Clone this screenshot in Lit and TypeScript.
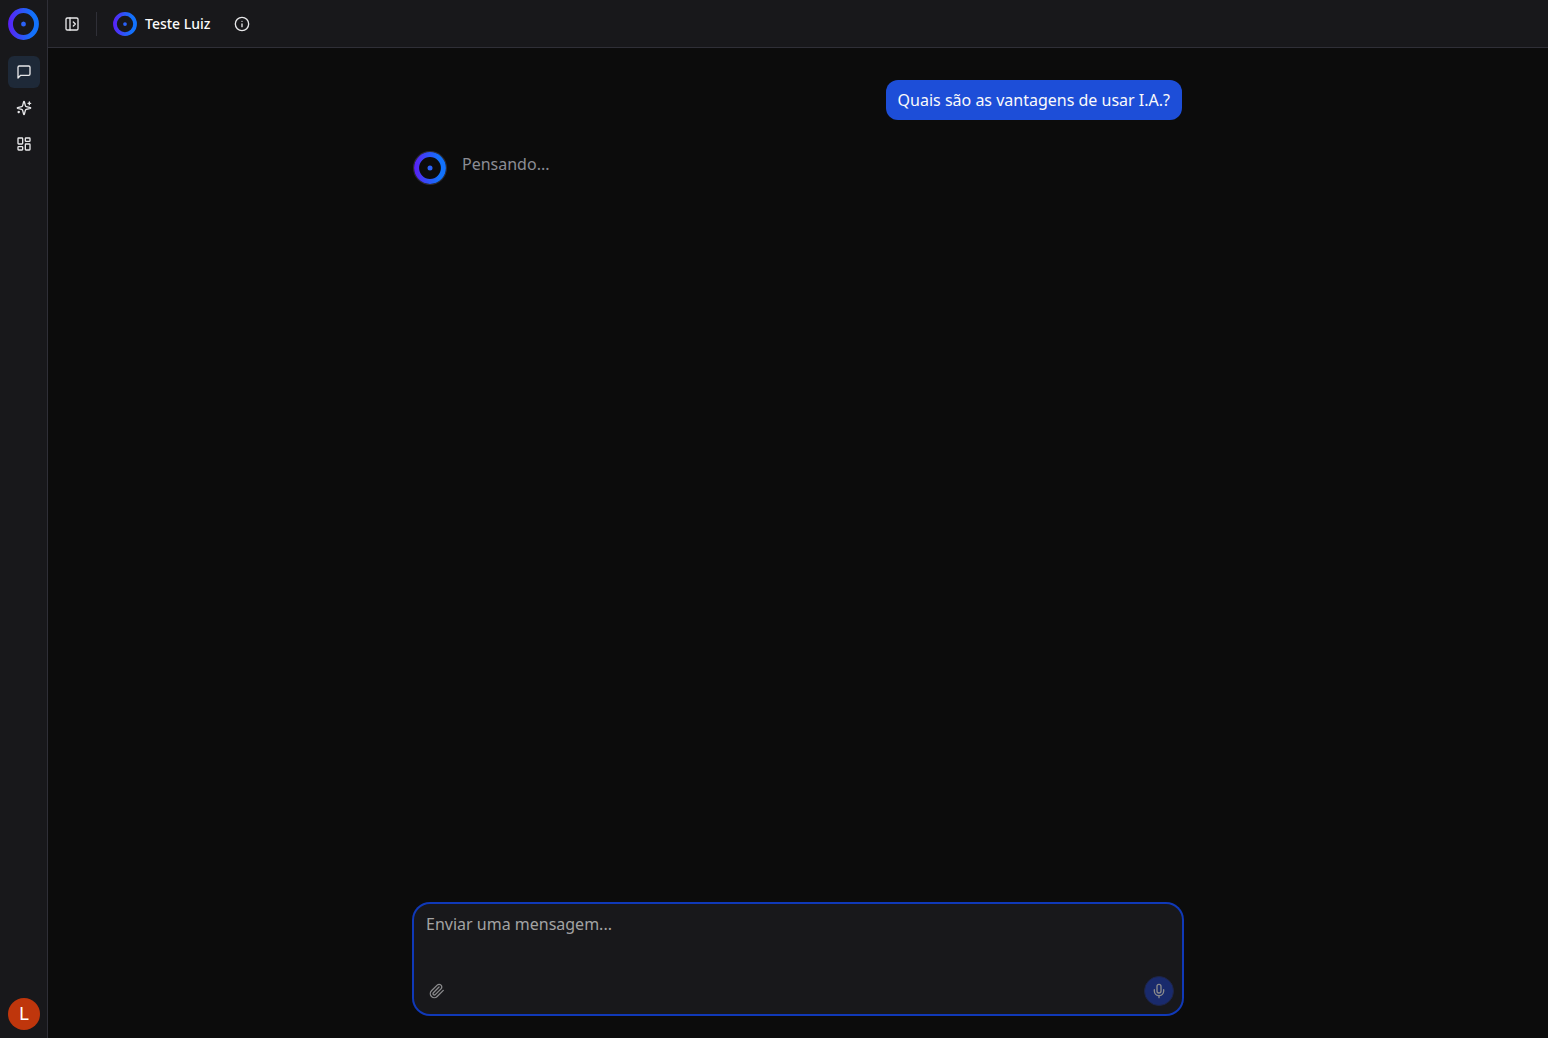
import { LitElement, html, svg, css, TemplateResult } from "lit";
import { customElement, property } from "lit/decorators.js";

const icons = {
  message: svg`<path d="M21 15a2 2 0 0 1-2 2H7l-4 4V5a2 2 0 0 1 2-2h14a2 2 0 0 1 2 2z"/>`,
  sparkles: svg`<path d="M9.937 15.5A2 2 0 0 0 8.5 14.063l-6.135-1.582a.5.5 0 0 1 0-.962L8.5 9.936A2 2 0 0 0 9.937 8.5l1.582-6.135a.5.5 0 0 1 .963 0L14.063 8.5A2 2 0 0 0 15.5 9.937l6.135 1.581a.5.5 0 0 1 0 .964L15.5 14.063a2 2 0 0 0-1.437 1.437l-1.582 6.135a.5.5 0 0 1-.963 0z"/><path d="M20 3v4"/><path d="M22 5h-4"/><path d="M4 17v2"/><path d="M5 18H3"/>`,
  dashboard: svg`<rect width="7" height="9" x="3" y="3" rx="1"/><rect width="7" height="5" x="14" y="3" rx="1"/><rect width="7" height="9" x="14" y="12" rx="1"/><rect width="7" height="5" x="3" y="16" rx="1"/>`,
  panel: svg`<rect width="18" height="18" x="3" y="3" rx="2"/><path d="M9 3v18"/><path d="m14 9 3 3-3 3"/>`,
  info: svg`<circle cx="12" cy="12" r="10"/><path d="M12 16v-4"/><path d="M12 8h.01"/>`,
  paperclip: svg`<path d="m21.44 11.05-9.19 9.19a6 6 0 0 1-8.49-8.49l8.57-8.57A4 4 0 1 1 18 8.84l-8.59 8.57a2 2 0 0 1-2.83-2.83l8.49-8.48"/>`,
  mic: svg`<path d="M12 2a3 3 0 0 0-3 3v7a3 3 0 0 0 6 0V5a3 3 0 0 0-3-3Z"/><path d="M19 10v2a7 7 0 0 1-14 0v-2"/><path d="M12 19v3"/>`,
};

const icon = (name: keyof typeof icons): TemplateResult => html`
  <svg class="icon" viewBox="0 0 24 24" aria-hidden="true">${icons[name]}</svg>
`;

@customElement("brand-ring")
export class BrandRing extends LitElement {
  @property() label = "";

  static styles = css`
    :host {
      display: block;
      flex: none;
      width: 32px;
      height: 32px;
    }
    .ring {
      display: block;
      width: 100%;
      height: 100%;
    }
  `;

  render() {
    return html`
      <svg class="ring" viewBox="0 0 32 32" preserveAspectRatio="none" role="img" aria-label=${this.label}>
        <defs>
          <linearGradient id="sweep" gradientUnits="userSpaceOnUse" x1="0" y1="16" x2="32" y2="16">
            <stop offset="0" stop-color="#5b1ef5" />
            <stop offset="0.5" stop-color="#2b58f8" />
            <stop offset="0.8" stop-color="#1272fb" />
            <stop offset="1" stop-color="#1272fb" />
          </linearGradient>
        </defs>
        <circle cx="16" cy="16" r="13.4" fill="none" stroke="url(#sweep)" stroke-width="5" />
        <circle cx="16" cy="16" r="2.5" fill="#2b62f8" />
      </svg>
    `;
  }
}

@customElement("app-root")
export class AppRoot extends LitElement {
  static styles = css`
    :host {
      display: flex;
      min-height: 100vh;
      background: #0c0c0c;
      color: #fafafa;
      font-family: "Noto Sans", sans-serif;
      font-size: 16px;
      line-height: 24px;
    }
    * {
      box-sizing: border-box;
    }
    button {
      display: flex;
      align-items: center;
      justify-content: center;
      padding: 0;
      border: 0;
      background: none;
      color: #e8e8ea;
      font: inherit;
      cursor: pointer;
    }
    .icon {
      width: 16px;
      height: 16px;
      fill: none;
      stroke: currentColor;
      stroke-width: 2;
      stroke-linecap: round;
      stroke-linejoin: round;
    }
    .rail {
      display: flex;
      flex: none;
      flex-direction: column;
      justify-content: space-between;
      width: 48px;
      padding: 8px 0 8px 8px;
      border-right: 1px solid #2f2f37;
      background: #18181b;
    }
    .rail brand-ring {
      width: 31px;
    }
    .nav {
      display: flex;
      flex-direction: column;
      gap: 4px;
      margin-top: 16px;
    }
    .nav-button {
      width: 32px;
      height: 32px;
      border-radius: 6px;
    }
    .nav-button.active {
      background: #1e2938;
    }
    .account {
      width: 32px;
      height: 32px;
      border-radius: 50%;
      background: #bf360c;
      color: #ffffff;
      font-family: Roboto, sans-serif;
      font-size: 18px;
    }
    .page {
      display: flex;
      flex: 1;
      flex-direction: column;
      min-width: 0;
    }
    .topbar {
      display: flex;
      align-items: center;
      height: 48px;
      padding: 0 8px;
      border-bottom: 1px solid #2f2f37;
      background: #18181b;
    }
    .tool {
      width: 32px;
      height: 32px;
    }
    .divider {
      width: 1px;
      height: 24px;
      margin: 0 16px 0 8px;
      background: #2f2f37;
    }
    .topbar brand-ring {
      width: 24px;
      height: 24px;
    }
    .title {
      margin: 0 16px 0 8px;
      font-size: 14px;
      font-weight: 500;
      line-height: 20px;
    }
    .thread {
      display: flex;
      flex: 1;
      flex-direction: column;
      gap: 32px;
      width: 100%;
      max-width: 768px;
      margin: 0 auto;
      padding: 32px 0;
    }
    .bubble {
      align-self: flex-end;
      margin: 0;
      padding: 8px 12px;
      border-radius: 12px;
      background: #1d4ed8;
    }
    .reply {
      display: flex;
      gap: 16px;
      color: #8b8d95;
    }
    .reply brand-ring {
      border-radius: 50%;
      box-shadow: 0 0 0 1px #2f2f37;
    }
    .reply p {
      margin: 0;
    }
    .composer {
      display: flex;
      flex-direction: column;
      width: 100%;
      max-width: 768px;
      margin: 0 auto 24px;
      border-radius: 16px;
      background: #18181b;
      box-shadow: 0 0 0 2px #1039b8;
    }
    .entry {
      display: block;
      height: 64px;
      padding: 8px 12px;
      border: 0;
      outline: 0;
      resize: none;
      background: none;
      color: inherit;
      font: inherit;
    }
    .entry::placeholder {
      color: #a3a3a3;
      opacity: 1;
    }
    .actions {
      display: flex;
      align-items: center;
      justify-content: space-between;
      padding: 8px;
    }
    .action {
      width: 30px;
      height: 30px;
      border-radius: 50%;
      color: #8a8a8c;
    }
    .action.voice {
      border: 1px solid #1e2546;
      background: #192a6c;
    }
  `;

  render() {
    return html`
      <aside class="rail">
        <div>
          <brand-ring label="Início"></brand-ring>
          <nav class="nav">
            <button class="nav-button active" aria-label="Conversas">${icon("message")}</button>
            <button class="nav-button" aria-label="Assistentes">${icon("sparkles")}</button>
            <button class="nav-button" aria-label="Painel">${icon("dashboard")}</button>
          </nav>
        </div>
        <button class="account" aria-label="Conta">L</button>
      </aside>
      <div class="page">
        <header class="topbar">
          <button class="tool" aria-label="Abrir painel">${icon("panel")}</button>
          <span class="divider"></span>
          <brand-ring label="Assistente"></brand-ring>
          <h1 class="title">Teste Luiz</h1>
          <button class="tool" aria-label="Informações">${icon("info")}</button>
        </header>
        <main class="thread">
          <p class="bubble">Quais são as vantagens de usar I.A.?</p>
          <div class="reply">
            <brand-ring label="Assistente"></brand-ring>
            <p>Pensando...</p>
          </div>
        </main>
        <form class="composer" @submit=${(e: Event) => e.preventDefault()}>
          <textarea class="entry" aria-label="Mensagem" placeholder="Enviar uma mensagem..."></textarea>
          <div class="actions">
            <button class="action" type="button" aria-label="Anexar arquivo">${icon("paperclip")}</button>
            <button class="action voice" type="button" aria-label="Gravar áudio">${icon("mic")}</button>
          </div>
        </form>
      </div>
    `;
  }
}
